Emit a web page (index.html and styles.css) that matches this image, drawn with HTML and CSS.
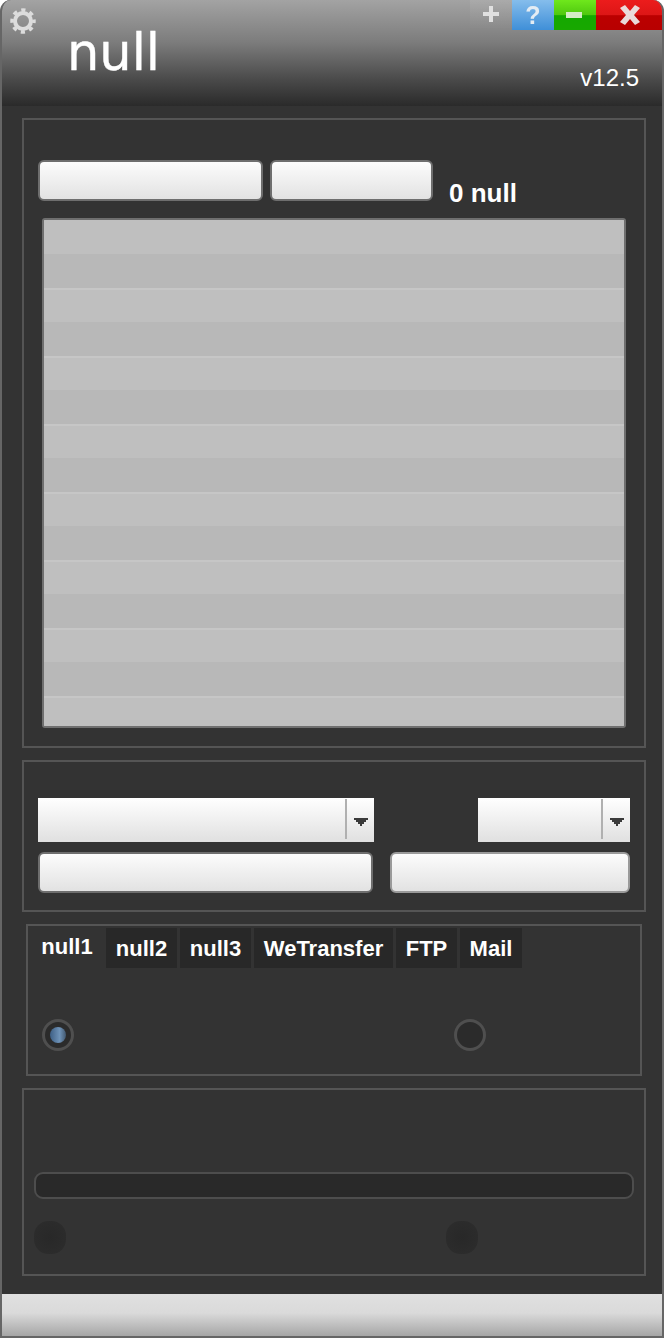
FILE: index.html
```html
<!DOCTYPE html>
<html lang="en">
<head>
  <meta charset="UTF-8">
  <title>null</title>
  <link rel="stylesheet" href="styles.css">
</head>
<body>
  <div class="window">
    <!-- Title bar -->
    <header class="titlebar">
      <svg class="gear" width="28" height="28" viewBox="0 0 28 28">
        <circle cx="14" cy="14" r="11" fill="none" stroke="#dcdcdc" stroke-width="3.5" stroke-dasharray="4.2 4.44" stroke-dashoffset="2.1"/>
        <circle cx="14" cy="14" r="8" fill="none" stroke="#dcdcdc" stroke-width="4"/>
      </svg>
      <div class="win-buttons">
        <div class="win-btn btn-plus">
          <svg width="24" height="24" viewBox="0 0 24 24"><path d="M10 4h4v6h6v4h-6v6h-4v-6H4v-4h6z" fill="#e0e0e0"/></svg>
        </div>
        <div class="win-btn btn-help"><span>?</span></div>
        <div class="win-btn btn-min">
          <svg width="24" height="24" viewBox="0 0 24 24"><rect x="3" y="9" width="16" height="6" fill="#d4ecc6"/></svg>
        </div>
        <div class="win-btn btn-close">
          <svg width="24" height="24" viewBox="0 0 24 24"><path d="M2 5l5-3 5 6 5-6 5 3-6 7 6 7-5 3-5-6-5 6-5-3 6-7z" fill="#eadada"/></svg>
        </div>
      </div>
      <h1 class="app-title">null</h1>
      <span class="version">v12.5</span>
    </header>

    <!-- Main -->
    <main class="content">
      <section class="panel panel-list">
        <div class="list-top">
          <button class="btn btn-a"></button>
          <button class="btn btn-b"></button>
          <span class="count">0 null</span>
        </div>
        <div class="list">
          <div class="row"></div><div class="row"></div><div class="row"></div>
          <div class="row"></div><div class="row"></div><div class="row"></div>
          <div class="row"></div><div class="row"></div><div class="row"></div>
          <div class="row"></div><div class="row"></div><div class="row"></div>
          <div class="row"></div><div class="row"></div><div class="row"></div>
        </div>
      </section>

      <section class="panel panel-options">
        <div class="select-row">
          <div class="select select-wide">
            <svg class="arrow" width="14" height="8" viewBox="0 0 14 8"><path d="M0 0h14v2h-2v2h-2v2H8v2H6V6H4V4H2V2H0z" fill="#3a3a3a"/></svg>
          </div>
          <div class="select select-small">
            <svg class="arrow" width="14" height="8" viewBox="0 0 14 8"><path d="M0 0h14v2h-2v2h-2v2H8v2H6V6H4V4H2V2H0z" fill="#3a3a3a"/></svg>
          </div>
        </div>
        <div class="button-row">
          <button class="btn btn-c"></button>
          <button class="btn btn-d"></button>
        </div>
      </section>

      <section class="panel panel-tabs">
        <nav class="tabs">
          <span class="tab active">null1</span>
          <span class="tab t2">null2</span>
          <span class="tab t3">null3</span>
          <span class="tab t4">WeTransfer</span>
          <span class="tab t5">FTP</span>
          <span class="tab t6">Mail</span>
        </nav>
        <div class="radios">
          <span class="radio checked"></span>
          <span class="radio"></span>
        </div>
      </section>

      <section class="panel panel-progress">
        <div class="progress"></div>
        <div class="leds">
          <span class="led"></span>
          <span class="led"></span>
        </div>
      </section>
    </main>

    <!-- Status bar -->
    <footer class="statusbar"></footer>
  </div>
</body>
</html>
```

FILE: styles.css
```css
/* General Styles */
html, body {
  margin: 0;
  padding: 0;
  background: #fff;
}

body {
  font-family: "Liberation Sans", Arial, sans-serif;
  color: #fff;
}

.window {
  width: 664px;
  height: 1338px;
  box-sizing: border-box;
  display: flex;
  flex-direction: column;
  background-color: #333;
  border: 2px solid #666;
  border-top: none;
  border-radius: 11px 11px 0 0;
  overflow: hidden;
}

/* Title bar */
.titlebar {
  position: relative;
  height: 106px;
  flex-shrink: 0;
  background: linear-gradient(#a3a3a3, #7c7c7c 40%, #4a4a4a 75%, #2a2a2a 100%);
}

.gear {
  position: absolute;
  left: 7px;
  top: 7px;
  filter: blur(0.4px);
}

.win-buttons {
  position: absolute;
  top: 0;
  right: 0;
  display: flex;
  height: 30px;
}

.win-btn {
  width: 42px;
  display: flex;
  align-items: center;
  justify-content: center;
}

.win-btn svg, .win-btn span {
  filter: blur(0.5px);
}

.btn-plus {
  background: linear-gradient(rgba(255, 255, 255, 0.08), rgba(255, 255, 255, 0));
}

.btn-plus svg {
  margin-top: -2px;
}

.btn-help {
  background: linear-gradient(#85bdec, #3f8fd8);
  color: #e4ecf3;
  font-size: 25px;
  font-weight: bold;
}

.btn-min {
  background: linear-gradient(#6fe81c 0%, #4fc80f 50%, #14a800 52%, #18a800 100%);
}

.btn-close {
  width: 66px;
  background: linear-gradient(#ec1c1c 0%, #dd1616 50%, #bb0000 52%, #b80000 100%);
}

.btn-close svg {
  margin-left: 2px;
}

.app-title {
  position: absolute;
  left: 65px;
  top: 20px;
  margin: 0;
  font-family: "DejaVu Sans", sans-serif;
  font-size: 51px;
  font-weight: normal;
  line-height: 66px;
  -webkit-text-stroke: 0.4px #fff;
}

.version {
  position: absolute;
  right: 23px;
  top: 64px;
  font-size: 24px;
  line-height: 28px;
}

/* Panels */
.content {
  flex: 1;
  display: flex;
  flex-direction: column;
  gap: 12px;
  padding: 12px 16px 0 20px;
}

.panel {
  box-sizing: border-box;
  width: 624px;
  border: 2px solid #555;
}

.panel-list {
  height: 630px;
  padding: 40px 0 0 14px;
}

.list-top {
  display: flex;
  height: 41px;
  gap: 7px;
}

.btn {
  display: block;
  height: 41px;
  padding: 0;
  box-sizing: border-box;
  background: linear-gradient(#fcfcfc, #e2e2e2);
  border: 2px solid #6e6e6e;
  border-radius: 6px;
}

.btn-a { width: 225px; }
.btn-b { width: 163px; }

.count {
  margin: 19px 0 0 9px;
  font-size: 26px;
  font-weight: bold;
  line-height: 29px;
  white-space: nowrap;
}

.list {
  box-sizing: border-box;
  width: 584px;
  height: 510px;
  margin: 17px 0 0 4px;
  overflow: hidden;
  background-color: #bfbfbf;
  border: 2px solid #6f6f6f;
  border-radius: 3px;
}

.row {
  height: 34px;
  box-sizing: border-box;
  background-color: #bfbfbf;
  border-top: 2px solid #c6c6c6;
}

.row:nth-child(even) {
  background-color: #b8b8b8;
  border-top: none;
}

.row:first-child {
  border-top: none;
}

.panel-options {
  height: 152px;
  padding: 36px 0 0 14px;
}

.select-row {
  display: flex;
  justify-content: space-between;
  width: 592px;
}

.select {
  position: relative;
  height: 44px;
  background: linear-gradient(#fff, #e0e0e0);
}

.select-wide { width: 336px; }
.select-small { width: 152px; }

.select::after {
  content: '';
  position: absolute;
  right: 27px;
  top: 1px;
  width: 2px;
  height: 40px;
  background-color: #b0b0b0;
}

.arrow {
  position: absolute;
  right: 6px;
  top: 20px;
}

.button-row {
  display: flex;
  gap: 17px;
  margin-top: 10px;
}

.btn-c { width: 335px; }

.btn-d {
  width: 240px;
  border-color: #9a9a9a;
}

.panel-tabs {
  width: 616px;
  height: 152px;
  margin-left: 4px;
  padding: 2px 0 0 0;
}

.tabs {
  display: flex;
  height: 40px;
  font-size: 22px;
  font-weight: bold;
}

.tab {
  box-sizing: border-box;
  height: 40px;
  margin-right: 3px;
  text-align: center;
  line-height: 41px;
  background-color: #282828;
}

.tab.active {
  width: 76px;
  margin-right: 2px;
  padding-left: 2px;
  line-height: 38px;
  background: none;
}

.t2 { width: 71px; }
.t3 { width: 71px; margin-right: 3px; }
.t4 { width: 139px; }
.t5 { width: 61px; }
.t6 { width: 62px; }

.radios {
  display: flex;
  gap: 380px;
  margin: 51px 0 0 14px;
}

.radio {
  box-sizing: border-box;
  width: 32px;
  height: 32px;
  display: flex;
  align-items: center;
  justify-content: center;
  border: 3px solid #4f4f4f;
  border-radius: 50%;
  background-color: #2b2b2b;
}

.radio.checked::after {
  content: '';
  width: 16px;
  height: 16px;
  border-radius: 50%;
  background: linear-gradient(to right, #3d5f85, #6f93b8 60%, #42586f);
}

.panel-progress {
  height: 188px;
  padding: 82px 0 0 10px;
}

.progress {
  box-sizing: border-box;
  width: 600px;
  height: 27px;
  background-color: #292929;
  border: 2px solid #4d4d4d;
  border-radius: 9px;
}

.leds {
  display: flex;
  gap: 380px;
  margin-top: 22px;
}

.led {
  width: 32px;
  height: 33px;
  border-radius: 45%;
  background: radial-gradient(circle, #282828, #2d2d2d);
}

/* Status bar */
.statusbar {
  height: 42px;
  flex-shrink: 0;
  background: linear-gradient(#e0e0e0, #dadada 45%, #a6a6a6 100%);
}
```
